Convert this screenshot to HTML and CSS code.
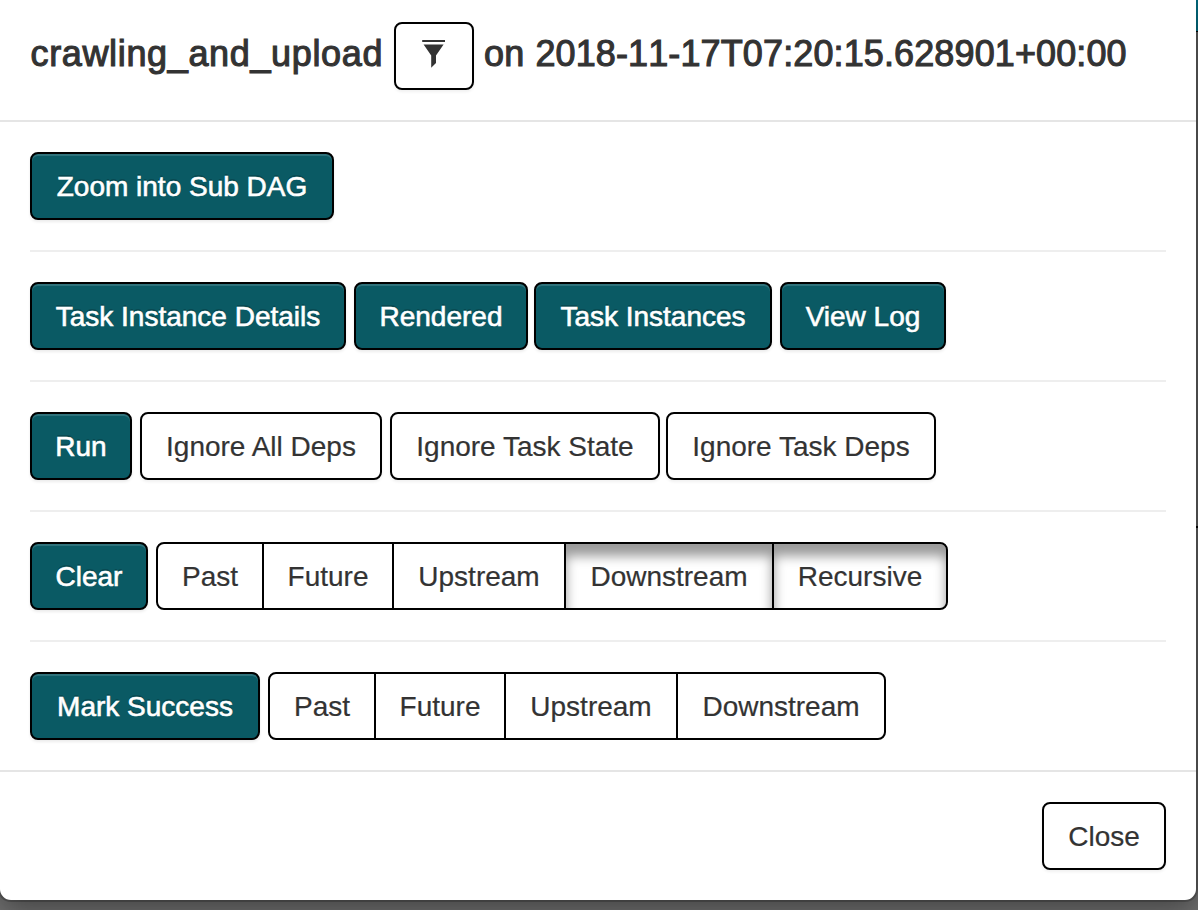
FILE: index.html
```html
<!DOCTYPE html>
<html lang="en">
<head>
<meta charset="utf-8">
<title>Task instance</title>
<link rel="stylesheet" href="styles.css">
</head>
<body>
<div class="navbar-strip"></div>
<div class="page-rule"></div>
<main class="modal">
  <header class="modal-header">
    <span class="title title-task">crawling_and_upload</span>
    <button class="btn btn-filter" aria-label="Filter"><svg class="funnel" viewBox="0 0 24 28" width="24" height="28"><path d="M.2 0H23V2H.2ZM1.6 4.5H21.6L14 15.5V23L9.2 27.8V15.5Z"/></svg></button>
    <span class="title title-date">on 2018-11-17T07:20:15.628901+00:00</span>
  </header>
  <section class="modal-body">
    <div class="row">
      <button class="btn primary w-zoom"><span>Zoom into Sub DAG</span></button>
    </div>
    <hr>
    <div class="row">
      <button class="btn primary w-details"><span>Task Instance Details</span></button>
      <button class="btn primary w-rendered"><span>Rendered</span></button>
      <button class="btn primary w-instances snug"><span>Task Instances</span></button>
      <button class="btn primary w-log"><span>View Log</span></button>
    </div>
    <hr>
    <div class="row">
      <button class="btn primary w-run"><span>Run</span></button>
      <button class="btn w-all"><span>Ignore All Deps</span></button>
      <button class="btn w-ignore"><span>Ignore Task State</span></button>
      <button class="btn w-ignore snug"><span>Ignore Task Deps</span></button>
    </div>
    <hr>
    <div class="row">
      <button class="btn primary w-clear"><span>Clear</span></button>
      <div class="btn-group">
        <button class="btn w-past"><span>Past</span></button>
        <button class="btn w-future"><span>Future</span></button>
        <button class="btn w-up"><span>Upstream</span></button>
        <button class="btn w-down active"><span>Downstream</span></button>
        <button class="btn w-rec active"><span>Recursive</span></button>
      </div>
    </div>
    <hr>
    <div class="row">
      <button class="btn primary w-mark"><span>Mark Success</span></button>
      <div class="btn-group">
        <button class="btn w-past"><span>Past</span></button>
        <button class="btn w-future"><span>Future</span></button>
        <button class="btn w-up"><span>Upstream</span></button>
        <button class="btn w-down"><span>Downstream</span></button>
      </div>
    </div>
  </section>
  <footer class="modal-footer">
    <button class="btn w-close"><span>Close</span></button>
  </footer>
</main>
</body>
</html>
```
FILE: styles.css
```css
* { box-sizing: border-box; }
html, body { margin: 0; height: 910px; overflow: hidden; }
body {
  position: relative;
  background: #707070;
  color: #333;
  font-family: "Liberation Sans", Arial, sans-serif;
  font-size: 28px;
}
.navbar-strip { position: absolute; top: 0; right: 0; width: 20px; height: 32px; background: #00829a; border-bottom: 1px solid #000; }
.page-rule { position: absolute; top: 526px; right: 0; width: 20px; height: 2px; background: #000; }
.modal {
  position: relative;
  width: 1196px;
  height: 900px;
  background: #fff;
  border-radius: 0 0 11px 11px;
  box-shadow: 0 0 0 2px rgba(0,0,0,.2), 0 10px 30px rgba(0,0,0,.4);
}
.modal-header { display: flex; align-items: flex-start; height: 122px; padding: 22px 30px 0; border-bottom: 2px solid #e5e5e5; }
.title { font-size: 36px; line-height: 40px; padding-top: 12px; white-space: nowrap; font-kerning: none; -webkit-text-stroke: 1.1px #333; }
.title-task { width: 364px; padding-left: .5px; letter-spacing: .65px; }
.title-date { margin-left: 10px; letter-spacing: .12px; word-spacing: 1px; }
.btn {
  display: flex;
  flex: none;
  align-items: center;
  justify-content: center;
  height: 68px;
  margin: 0;
  padding: 0;
  border: 2px solid #000;
  border-radius: 8px;
  background: #fff;
  box-shadow: 0 2px 3px rgba(0,0,0,.06);
  color: #333;
  font: inherit;
  line-height: 40px;
  white-space: nowrap;
}
.btn span { padding-top: 2px; -webkit-text-stroke: .2px; }
.btn-filter { width: 80px; }
.funnel { fill: #333; margin-bottom: 4px; }
.primary { background: #0a5a64; color: #fff; box-shadow: inset 0 2px 0 rgba(255,255,255,.15), 0 2px 3px rgba(0,0,0,.08); text-shadow: 0 -2px 0 rgba(0,0,0,.2); }
.primary span { -webkit-text-stroke: .6px; }
.modal-body { padding: 30px; height: 648px; }
.row { display: flex; gap: 8px; }
hr { height: 2px; margin: 30px 0; border: 0; background: #eee; }
.snug { margin-left: -2px; }
.btn-group { display: flex; }
.btn-group .btn { border-radius: 0; margin-left: -2px; box-shadow: none; }
.btn-group .btn:first-child { margin-left: 0; border-radius: 8px 0 0 8px; }
.btn-group .btn:last-child { border-radius: 0 8px 8px 0; }
.btn-group .active { box-shadow: inset 0 12px 12px rgba(0,0,0,.4); }
.modal-footer { display: flex; justify-content: flex-end; padding: 30px; border-top: 2px solid #e5e5e5; }
.w-zoom { width: 304px; }
.w-details { width: 316px; }
.w-rendered { width: 174px; }
.w-instances { width: 238px; }
.w-log { width: 166px; }
.w-run { width: 102px; }
.w-all { width: 242px; }
.w-ignore { width: 270px; }
.w-clear { width: 118px; }
.w-past { width: 108px; }
.w-future { width: 132px; }
.w-up { width: 174px; }
.w-down { width: 210px; }
.w-rec { width: 176px; }
.w-mark { width: 230px; }
.w-close { width: 124px; }
```
